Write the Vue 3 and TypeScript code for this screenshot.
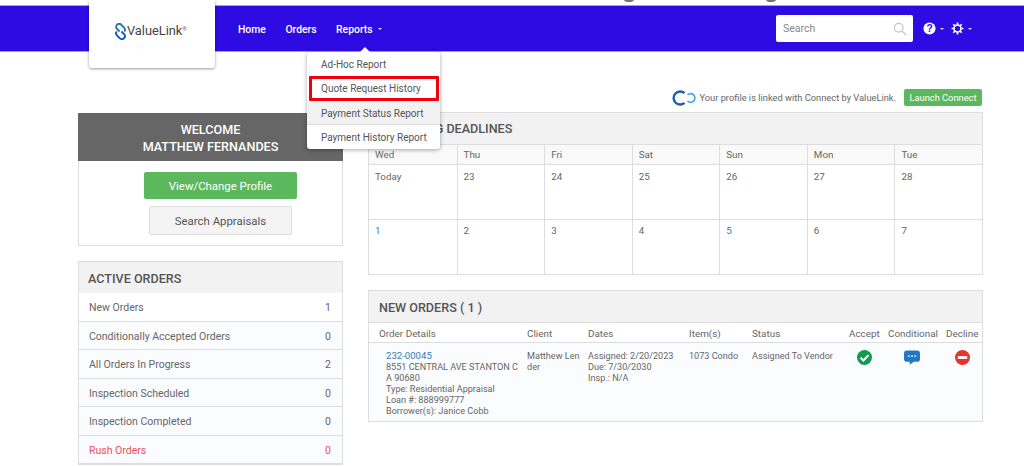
<script setup lang="ts">
const days = ['Wed', 'Thu', 'Fri', 'Sat', 'Sun', 'Mon', 'Tue']
const weekOne = ['Today', '23', '24', '25', '26', '27', '28']
const weekTwo = ['1', '2', '3', '4', '5', '6', '7']

const reportLinks = [
	{ label: 'Ad-Hoc Report', cls: '' },
	{ label: 'Quote Request History', cls: 'marked' },
	{ label: 'Payment Status Report', cls: 'hovered' },
	{ label: 'Payment History Report', cls: '' },
]

const activeOrders = [
	{ label: 'New Orders', count: 1 },
	{ label: 'Conditionally Accepted Orders', count: 0 },
	{ label: 'All Orders In Progress', count: 2 },
	{ label: 'Inspection Scheduled', count: 0 },
	{ label: 'Inspection Completed', count: 0 },
	{ label: 'Rush Orders', count: 0, rush: true },
]
</script>

<template>
	<div class="page">
		<div class="top-strip">
			<i class="blot one"></i>
			<i class="blot two"></i>
		</div>
		<header class="navbar">
			<div class="logo-card">
				<svg class="logo-mark" viewBox="0 0 14 18" width="13" height="17">
					<path d="M6 9 L3 6 A3.2 3.2 0 0 1 8 2 L11 5 A3 3 0 0 1 11 9" fill="none" stroke="#1b75bb" stroke-width="2" />
					<path d="M8 9 L11 12 A3.2 3.2 0 0 1 6 16 L3 13 A3 3 0 0 1 3 9" fill="none" stroke="#1450c8" stroke-width="2" />
				</svg>
				<span class="logo-text">ValueLink</span><span class="logo-reg">®</span>
			</div>
			<nav class="nav-links">
				<a>Home</a>
				<a>Orders</a>
				<a class="reports">Reports <span class="caret"></span></a>
			</nav>
			<div class="nav-right">
				<div class="search">
					<span>Search</span>
					<svg viewBox="0 0 16 16" width="14" height="14">
						<circle cx="6.5" cy="6.5" r="5" fill="none" stroke="#c4c4c4" stroke-width="1.3" />
						<path d="M10.5 10.5 L15 15" stroke="#c4c4c4" stroke-width="1.5" />
					</svg>
				</div>
				<svg class="nav-icon" viewBox="0 0 14 14" width="13" height="13">
					<circle cx="7" cy="7" r="6.5" fill="#fff" />
					<text x="7" y="10.5" text-anchor="middle" class="help-mark">?</text>
				</svg>
				<span class="caret small"></span>
				<svg class="nav-icon gear" viewBox="0 0 24 24" width="13" height="13">
					<circle cx="12" cy="12" r="6.5" fill="none" stroke="#fff" stroke-width="3" />
					<path d="M12 1v5M12 18v5M1 12h5M18 12h5M4.200 4.200l3.600 3.600M16.200 16.200l3.600 3.600M4.200 19.800l3.600-3.600M16.200 7.800l3.600-3.600" stroke="#fff" stroke-width="3" />
				</svg>
				<span class="caret small"></span>
			</div>
		</header>

		<div class="reports-menu">
			<a v-for="link in reportLinks" :key="link.label" :class="link.cls">{{ link.label }}</a>
		</div>

		<div class="connect-row">
			<svg viewBox="0 0 26 16" width="26" height="16">
				<path d="M12.500 3.200 A6.500 6.500 0 1 0 12.500 12.800" fill="none" stroke="#1d5ea8" stroke-width="2.400" />
				<path d="M15.500 5 A4.300 4.300 0 1 1 15.500 11" fill="none" stroke="#49a8e0" stroke-width="1.700" />
			</svg>
			<span class="connect-text">Your profile is linked with Connect by ValueLink.</span>
			<button class="launch">Launch Connect</button>
		</div>

		<main class="columns">
			<aside class="left-col">
				<section class="welcome">
					<div class="welcome-head">WELCOME<br />MATTHEW FERNANDES</div>
					<div class="welcome-body">
						<button class="btn-green">View/Change Profile</button>
						<button class="btn-gray">Search Appraisals</button>
					</div>
				</section>

				<section class="panel active-orders">
					<h3 class="panel-title">ACTIVE ORDERS</h3>
					<div v-for="row in activeOrders" :key="row.label" class="order-row" :class="{ rush: row.rush }">
						<span>{{ row.label }}</span>
						<span>{{ row.count }}</span>
					</div>
				</section>
			</aside>

			<div class="right-col">
				<section class="panel calendar">
					<h3 class="panel-title cal-title">UPCOMING DEADLINES</h3>
					<div class="cal-grid">
						<div v-for="d in days" :key="d" class="cal-day">{{ d }}</div>
						<div v-for="d in weekOne" :key="d" class="cal-cell">{{ d }}</div>
						<div v-for="(d, i) in weekTwo" :key="d" class="cal-cell" :class="{ linked: i === 0 || i === 4 }">{{ d }}</div>
					</div>
				</section>

				<section class="panel new-orders">
					<h3 class="panel-title">NEW ORDERS ( 1 )</h3>
					<div class="orders-grid heads">
						<span class="first">Order Details</span>
						<span>Client</span>
						<span>Dates</span>
						<span>Item(s)</span>
						<span>Status</span>
						<span>Accept</span>
						<span>Conditional</span>
						<span>Decline</span>
					</div>
					<div class="orders-grid body">
						<div class="details">
							<a>232-00045</a><br />
							8551 CENTRAL AVE STANTON C<br />
							A 90680<br />
							Type: Residential Appraisal<br />
							Loan #: 888999777<br />
							Borrower(s): Janice Cobb
						</div>
						<div>Matthew Len<br />der</div>
						<div>Assigned: 2/20/2023<br />Due: 7/30/2030<br />Insp.: N/A</div>
						<div>1073 Condo</div>
						<div>Assigned To Vendor</div>
						<div class="action accept">
							<svg viewBox="0 0 16 16" width="15" height="15">
								<circle cx="8" cy="8" r="8" fill="#129a4f" />
								<path d="M3.800 8.300 L6.800 11.200 L12.300 5.500" fill="none" stroke="#fff" stroke-width="2.200" />
							</svg>
						</div>
						<div class="action conditional">
							<svg viewBox="0 0 17 16" width="16" height="15">
								<path d="M3 0.500 H14 A3 3 0 0 1 17 3.500 V9.500 A3 3 0 0 1 14 12.500 H10.500 L6 15.800 V12.500 H3 A3 3 0 0 1 0 9.500 V3.500 A3 3 0 0 1 3 0.500 Z" fill="#1f78c1" />
								<circle cx="5" cy="6.500" r="1" fill="#fff" />
								<circle cx="8.500" cy="6.500" r="1" fill="#fff" />
								<circle cx="12" cy="6.500" r="1" fill="#fff" />
							</svg>
						</div>
						<div class="action decline">
							<svg viewBox="0 0 16 16" width="15" height="15">
								<circle cx="8" cy="8" r="8" fill="#e8352b" />
								<rect x="3" y="6.500" width="10" height="3" fill="#fff" />
							</svg>
						</div>
					</div>
				</section>
			</div>
		</main>
	</div>
</template>

<style>
	html,
	body {
		margin: 0;
		height: 466px;
		overflow: hidden;
		background: #fff;
	}
</style>

<style scoped>
	.page {
		position: relative;
		height: 466px;
		overflow: hidden;
		font-family: Roboto, 'Liberation Sans', sans-serif;
		font-size: 10.5px;
		color: #666;
	}

	/* обрезанные остатки сверху, как на скриншоте */
	.top-strip {
		position: relative;
		height: 5px;
	}
	.blot {
		position: absolute;
		top: -3px;
		width: 10px;
		height: 5px;
		border-radius: 50%;
		background: #777;
	}
	.blot.one {
		left: 624px;
	}
	.blot.two {
		left: 766px;
	}

	.navbar {
		position: relative;
		display: flex;
		align-items: center;
		height: 47px;
		background: #2f0be3;
		border-top: 1px solid #a99bf0;
		border-bottom: 1px solid #a99bf0;
		box-sizing: border-box;
	}

	.logo-card {
		position: absolute;
		left: 89px;
		top: -6px;
		width: 126px;
		height: 68px;
		box-sizing: border-box;
		padding: 21px 3px 0 0;
		display: flex;
		justify-content: center;
		align-items: flex-start;
		background: #fff;
		border-radius: 0 0 3px 3px;
		box-shadow: 0 1px 3px rgba(0, 0, 0, 0.4);
		z-index: 2;
	}
	.logo-mark {
		margin-top: 2px;
	}
	.logo-text {
		font-size: 12.8px;
		line-height: 20px;
		color: #444;
	}
	.logo-reg {
		font-size: 6px;
		line-height: 15px;
		color: #666;
	}

	.nav-links {
		display: flex;
		gap: 19.5px;
		margin-left: 238px;
		padding-top: 1px;
		font-size: 10.4px;
		font-weight: 500;
		color: #fff;
	}
	.reports {
		display: flex;
		align-items: center;
		gap: 5px;
	}
	.caret {
		display: inline-block;
		width: 0;
		height: 0;
		border-left: 2px solid transparent;
		border-right: 2px solid transparent;
		border-top: 2px solid #ddd;
	}

	.nav-right {
		display: flex;
		align-items: center;
		margin-left: auto;
		margin-right: 52px;
	}
	.search {
		display: flex;
		align-items: center;
		justify-content: space-between;
		box-sizing: border-box;
		width: 137px;
		height: 27px;
		padding: 0 6px 0 7px;
		margin-right: 10px;
		background: #fff;
		border-radius: 2px;
		font-size: 10.5px;
		color: #888;
	}
	.help-mark {
		font-family: 'Liberation Sans', sans-serif;
		font-size: 11px;
		font-weight: 700;
		fill: #2f0be3;
	}
	.nav-icon + .caret {
		margin-left: 4px;
	}
	.gear {
		margin-left: 7px;
	}

	.reports-menu {
		position: absolute;
		left: 307px;
		top: 52px;
		width: 133px;
		background: #fff;
		border-radius: 3px;
		box-shadow: 0 1px 4px rgba(0, 0, 0, 0.35);
		z-index: 3;
		font-size: 10px;
	}
	.reports-menu::before {
		content: '';
		position: absolute;
		left: 53px;
		top: -5px;
		border-left: 5px solid transparent;
		border-right: 5px solid transparent;
		border-bottom: 5px solid #fff;
	}
	.reports-menu a {
		display: block;
		box-sizing: border-box;
		height: 24.25px;
		padding-left: 14px;
		line-height: 25.5px;
		color: #555;
		white-space: nowrap;
	}
	.reports-menu a.marked {
		outline: 3px solid #f0000f;
		outline-offset: -3px;
		margin: 0 1px 0 2px;
		padding-left: 12px;
		border-radius: 1px;
	}
	.reports-menu a.hovered {
		background: #f2f2f2;
		border-bottom: 1px solid #ddd;
	}

	.connect-row {
		display: flex;
		align-items: center;
		justify-content: flex-end;
		height: 17px;
		margin: 37px 42px 6px 0;
	}
	.connect-text {
		margin: 0 8px 0 1px;
		font-size: 9.3px;
		color: #666;
	}
	.launch {
		height: 17px;
		width: 78px;
		padding: 0;
		border: 0;
		border-radius: 2px;
		background: #5cb85c;
		color: #fff;
		font-family: inherit;
		font-size: 9.3px;
	}

	.columns {
		display: flex;
		gap: 25px;
		padding: 0 41px 0 78px;
	}
	.left-col {
		width: 265px;
		flex-shrink: 0;
		display: flex;
		flex-direction: column;
		gap: 15px;
		padding-top: 1px;
	}
	.right-col {
		flex: 1;
		display: flex;
		flex-direction: column;
		gap: 15px;
	}

	.welcome {
		border: 1px solid #ddd;
		border-top: 0;
	}
	.welcome-head {
		margin: 0 -1px;
		height: 48px;
		box-sizing: border-box;
		padding-top: 8px;
		background: #666;
		color: #fff;
		font-size: 12.6px;
		font-weight: 500;
		line-height: 17px;
		text-align: center;
	}
	.welcome-body {
		display: flex;
		flex-direction: column;
		align-items: center;
		gap: 7px;
		padding: 11px 0 10px 20px;
	}
	.btn-green {
		width: 153px;
		height: 27px;
		border: 0;
		border-radius: 2px;
		background: #5cb85c;
		color: #fff;
		font-family: inherit;
		font-size: 11.4px;
	}
	.btn-gray {
		width: 143px;
		height: 29px;
		border: 1px solid #ddd;
		border-radius: 2px;
		background: #f4f4f4;
		color: #555;
		font-family: inherit;
		font-size: 11.4px;
	}

	.panel {
		border: 1px solid #ddd;
		box-sizing: border-box;
		background: #fff;
	}
	.panel-title {
		margin: 0;
		height: 31px;
		padding-left: 9px;
		background: #f2f2f2;
		font-size: 12.6px;
		font-weight: 500;
		line-height: 33px;
		color: #555;
	}
	.cal-title {
		line-height: 31px;
	}
	.new-orders .panel-title {
		padding-left: 10px;
	}

	.order-row {
		display: flex;
		justify-content: space-between;
		box-sizing: border-box;
		height: 28.5px;
		padding: 0 11px 0 10px;
		border-bottom: 1px solid #ddd;
		line-height: 30px;
		background: #fbfcfe;
	}
	.order-row:first-of-type {
		background: #fff;
	}
	.order-row.rush {
		color: #f0505a;
	}

	.cal-grid {
		display: grid;
		grid-template-columns: repeat(7, 1fr);
		grid-auto-rows: 54.5px;
		grid-template-rows: 21px;
		font-size: 9.8px;
	}
	.cal-day {
		box-sizing: border-box;
		padding: 4px 6px;
		background: #f9f9f9;
		border-top: 1px solid #ddd;
		border-bottom: 1px solid #ddd;
		border-left: 1px solid #ddd;
	}
	.cal-cell {
		box-sizing: border-box;
		padding: 5.5px 6px;
		border-left: 1px solid #ddd;
		border-bottom: 1px solid #ddd;
	}
	.cal-day:nth-child(7n + 1),
	.cal-cell:nth-child(7n + 1) {
		border-left: 0;
	}
	.cal-cell.linked {
		color: #337ab7;
	}
	.calendar .cal-grid > :nth-last-child(-n + 7) {
		border-bottom: 0;
	}

	.orders-grid {
		display: grid;
		grid-template-columns: 158px 61px 101px 63px 97px 39px 58px 1fr;
	}
	.heads {
		height: 21px;
		padding-top: 1px;
		align-items: center;
		border-top: 1px solid #ddd;
		border-bottom: 1px solid #ddd;
		box-sizing: border-box;
		white-space: nowrap;
		font-size: 9.9px;
	}
	.heads .first {
		padding-left: 10px;
	}
	.body {
		height: 78px;
		padding-top: 8px;
		box-sizing: border-box;
		background: #fbfcfe;
		color: #666;
		font-size: 9.1px;
		line-height: 10.9px;
		white-space: nowrap;
	}
	.details {
		padding-left: 17px;
	}
	.details a {
		color: #337ab7;
		font-size: 9.6px;
	}
	.action {
		display: flex;
		align-items: flex-start;
		margin-top: -1px;
	}
	.accept {
		padding-left: 8px;
	}
	.conditional {
		padding-left: 16px;
	}
	.decline {
		padding-left: 9px;
	}
</style>
